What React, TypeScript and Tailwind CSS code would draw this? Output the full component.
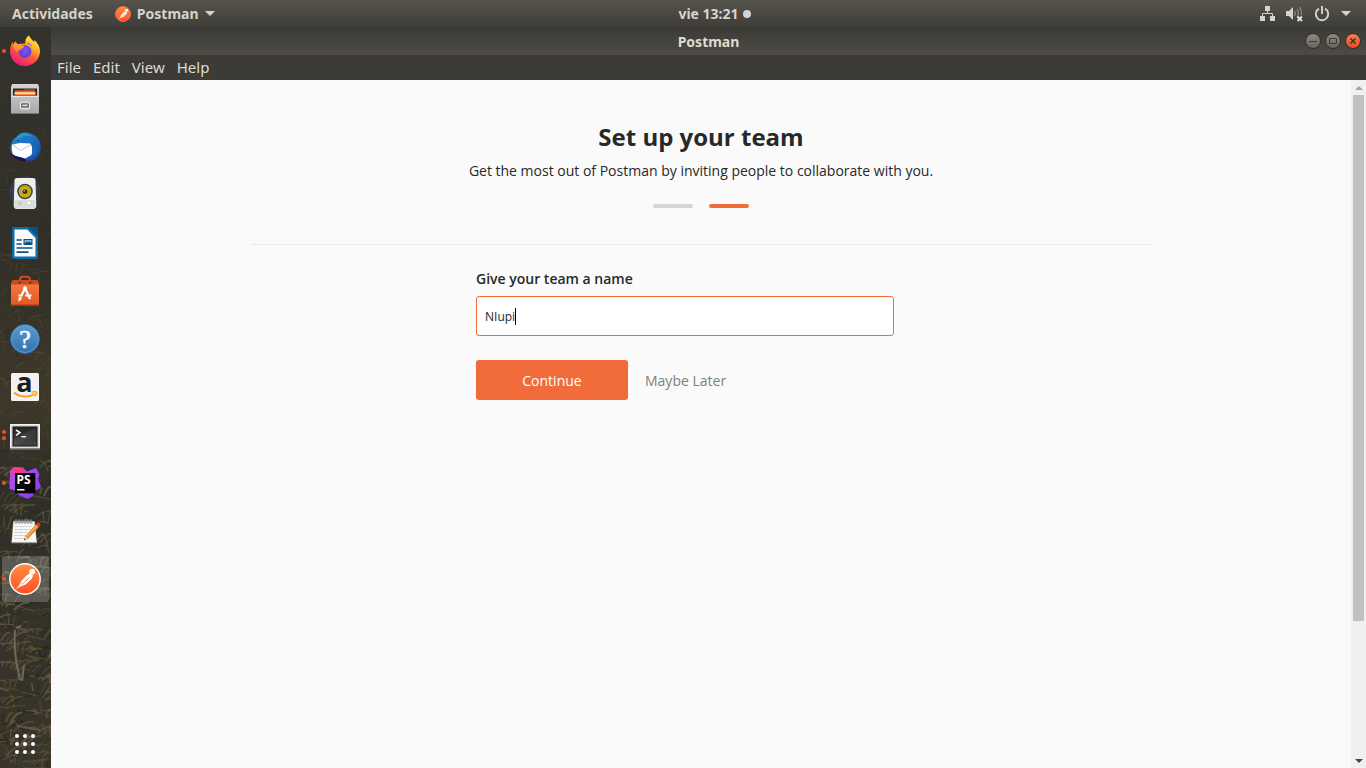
import { useState } from "react";
import type { ReactNode } from "react";

const uiFont = "font-['Noto_Sans','Open_Sans',sans-serif]";

function PostmanLogo({ className, ring = false }: { className: string; ring?: boolean }) {
  return (
    <svg viewBox="0 0 32 32" className={className} aria-hidden="true">
      <defs>
        <linearGradient id="postmanFill" x1="0" y1="0" x2="0" y2="1">
          <stop offset="0" stopColor="#ff9040" />
          <stop offset="1" stopColor="#ff5026" />
        </linearGradient>
      </defs>
      <circle cx="16" cy="16" r="15.2" fill="url(#postmanFill)" stroke={ring ? "#fff" : "#ff7a45"} strokeWidth="1.4" />
      <circle cx="23.200" cy="8.700" r="2.900" fill="#fff" />
      <path d="M20.500 10.500 17 13l-5.500 6-.8 2.800L6.800 26l5.700-3 3.700-1.200 6.500-6 1.500-3.300z" fill="#fff" />
      <path d="m20.500 14.500-7 6.500m-1.800-1.500 2 1.800" stroke="#f5733d" strokeWidth=".8" fill="none" />
    </svg>
  );
}

function Firefox() {
  return (
    <svg viewBox="0 0 32 32" className="size-8">
      <defs>
        <linearGradient id="ffBody" x1=".85" y1="0" x2=".3" y2="1">
          <stop offset="0" stopColor="#fff44f" />
          <stop offset=".35" stopColor="#ffb32a" />
          <stop offset=".6" stopColor="#ff5b36" />
          <stop offset="1" stopColor="#e5158a" />
        </linearGradient>
        <radialGradient id="ffGlobe" cx=".5" cy=".35" r=".7">
          <stop offset="0" stopColor="#8b4cf0" />
          <stop offset="1" stopColor="#4a48c8" />
        </radialGradient>
        <linearGradient id="ffFox" x1="0" y1="0" x2="0" y2="1">
          <stop offset="0" stopColor="#ffb02e" />
          <stop offset="1" stopColor="#ff7139" />
        </linearGradient>
      </defs>
      <path d="M19.8.4c1.4 2.8 3.600 4.200 5.200 6.500l.3-2C29 8 31 12 31 16c0 8.600-6.700 15-15.200 15S1 24.400 1 16.200c0-4 1.100-7 2.700-9.800l.7 3 2-3 1.800 2.500 8.200-.4C15.800 5 17.600 2 19.800.4z" fill="url(#ffBody)" />
      <circle cx="16" cy="16.500" r="6.500" fill="url(#ffGlobe)" />
      <path d="M14.600 9c3-1.600 6.400.3 7.800 2.500l.4-1.500-3-2.200z" fill="#9059ff" />
      <path d="M4.400 9.400 6.400 6.400l2.200 3.200c1.600-.4 3 .2 4 1.400h2.700c-.3 1.600-1.500 2-2.700 2.600l-.7 1.400c-2-.2-3.600.6-3.400 3C6 15 3.800 13 4.400 9.400z" fill="url(#ffFox)" />
    </svg>
  );
}

function Files() {
  return (
    <svg viewBox="0 0 32 32" className="size-8">
      <defs>
        <linearGradient id="cabinet" x1="0" y1="0" x2="0" y2="1">
          <stop offset="0" stopColor="#d4d4d4" />
          <stop offset="1" stopColor="#a9a9a9" />
        </linearGradient>
      </defs>
      <path d="M3 1h26l1 3v26H2V4z" fill="url(#cabinet)" />
      <path d="M2 30h28v1H2z" fill="#777" />
      <path d="M4 5.500h24v7H4z" fill="#2a2421" />
      <path d="M6 7h8l1-.8h11V12H6z" fill="#b34716" />
      <path d="M5.600 8.500h20.800v3.500H5.600z" fill="#f58a3c" />
      <path d="M5.600 9.500h20.800v1.200H5.600z" fill="#fff2e2" />
      <path d="M2.500 13h27v.8h-27z" fill="#efefef" />
      <rect x="11.500" y="19" width="9" height="7" rx="1" fill="#bdbdbd" stroke="#ededed" />
      <rect x="12.800" y="21" width="6.400" height="2.800" fill="#e8e8e8" stroke="#444" />
    </svg>
  );
}

function Thunderbird() {
  return (
    <svg viewBox="0 0 32 32" className="size-8">
      <defs>
        <linearGradient id="tbBlue" x1="0" y1="0" x2="1" y2="1">
          <stop offset="0" stopColor="#2089cf" />
          <stop offset=".5" stopColor="#1a6fc4" />
          <stop offset="1" stopColor="#173f94" />
        </linearGradient>
      </defs>
      <path d="M9 4.500C12 1.500 17 1 21 2.200 28 4.400 32 10 31.700 17c-.3 7-4.700 12-10.700 14l1-2.400-4 1.600C8 30 1 23 .6 15.500l1.600 1.700C1.800 13 3 9 6 7z" fill="url(#tbBlue)" />
      <path d="M12 2.400c4-1.600 9 .2 12 3.600-5-2-10-1.300-13 1.300-2 1.700-3.500 2-5.400 1.300C7.800 8 9 4 12 2.400z" fill="#2b93d2" />
      <path d="m2.600 13.800 8-1.800 12 .5 1 11-7.500 4L3.500 24z" fill="#fff" />
      <path d="m3 13.500 8.500 6L22 13.500" fill="none" stroke="#b9c4d8" />
      <path d="M.8 18c1 4 3 6 7 7.500 3 1 5.500 1 8.200 2.500l2 2C9 31 2.300 26 .8 18z" fill="#24104e" />
      <path d="M20.500 11c4 5 3.500 11 .4 15.500 5-2 8-6 8.300-12" fill="#1d65b9" />
      <circle cx="9" cy="9.500" r=".8" fill="#0b2f55" />
    </svg>
  );
}

function Rhythmbox() {
  return (
    <svg viewBox="0 0 32 32" className="size-8 overflow-visible">
      <g fill="none" stroke="#3e5f93">
        <circle cx="16" cy="13" r="12.500" opacity=".8" />
        <circle cx="16" cy="13" r="15" opacity=".5" />
      </g>
      <path d="M8-1h16c1.500 0 2.400.8 2.500 2.300l.8 25.200c0 2-1 3.500-3 3.500H7.700c-2 0-3-1.500-3-3.500L5.500 1.300C5.600-.2 6.500-1 8-1z" fill="#eeeeec" />
      <path d="M5.500 21h21l.5 6c0 1.500-1 2.500-2.500 2.500h-17C6 29.500 5 28.500 5 27z" fill="#dcdcda" />
      <circle cx="16" cy="12.500" r="7.800" fill="#44453f" />
      <circle cx="16" cy="12.500" r="6.200" fill="#d6b91f" />
      <circle cx="16" cy="12.500" r="4.800" fill="none" stroke="#8f7a0b" strokeWidth=".6" />
      <circle cx="16" cy="12.500" r="2.600" fill="#373832" />
      <circle cx="15.300" cy="11.700" r=".9" fill="#aaa" />
      <circle cx="11" cy="24.500" r="2" fill="#c9c9c7" />
      <rect x="18" y="22" width="3.500" height="4" rx="1.700" fill="#fff" stroke="#bbb" strokeWidth=".5" />
    </svg>
  );
}

function Writer() {
  return (
    <svg viewBox="0 0 32 32" className="size-8">
      <path d="M5 0h14.500L29 9.500V30c0 1.200-.8 2-2 2H5c-1.200 0-2-.8-2-2V2c0-1.200.8-2 2-2z" fill="#0f6aa8" />
      <path d="M19 0h10v9.500z" fill="#0b5288" />
      <path d="M5.500 2.500h12.800L26.500 11v18.500h-21z" fill="#fafafa" />
      <path d="M7.500 13h5.200m-5.200 4h5.200m-5.200 4h16m-16 4.200h12" stroke="#0d4f84" strokeWidth="1.700" />
      <rect x="14.500" y="12" width="9" height="6" fill="#0d4f84" />
      <path d="M15.500 13h7v3l-2-1.500-1.700 1-1-1-2.300 2z" fill="#78b8e5" />
    </svg>
  );
}

function Software() {
  return (
    <svg viewBox="0 0 32 32" className="size-8">
      <defs>
        <linearGradient id="bag" x1="0" y1="0" x2="0" y2="1">
          <stop offset="0" stopColor="#f47c45" />
          <stop offset="1" stopColor="#e55823" />
        </linearGradient>
      </defs>
      <path d="M11 8V4.500C11 2.500 12 1.700 14 1.700h4c2 0 3 .8 3 2.800V8" fill="none" stroke="#d64b1d" strokeWidth="2" />
      <path d="M3.500 5.500h25L30 9v21H2V9z" fill="url(#bag)" />
      <path d="M3.500 5.500h25L30 9.500H2z" fill="#cf4a1c" />
      <path d="M9.500 6.500H12v2H9.500zm10.500 0h2.500v2H20z" fill="#7e2a10" />
      <path d="M2 29.500h28V31H2z" fill="#aa3513" />
      <g fill="none" stroke="#fff" strokeWidth="2.200">
        <path d="m11 24 .8-2M13 19.500l3-6.500 5 11M9.500 20.500h4.200m2.500 0h6.300" />
      </g>
      <path d="m14 13.500 2-1.500 2 1.500M10.200 22.500l-.2 3 2.400-1.800" stroke="#fff" strokeWidth="1.200" fill="none" />
    </svg>
  );
}

function HelpIcon() {
  return (
    <svg viewBox="0 0 32 32" className="size-8 overflow-visible">
      <defs>
        <linearGradient id="helpBlue" x1="0" y1="0" x2="0" y2="1">
          <stop offset="0" stopColor="#5a9bd2" />
          <stop offset="1" stopColor="#3470ad" />
        </linearGradient>
      </defs>
      <circle cx="16" cy="16" r="14.500" fill="url(#helpBlue)" stroke="#2d639a" />
      <circle cx="16" cy="16" r="13.500" fill="none" stroke="#79b0dd" strokeWidth=".6" />
      <text x="16" y="25" textAnchor="middle" fill="#fff" fontSize="26" fontFamily="Liberation Serif" stroke="#fff" strokeWidth=".5">?</text>
    </svg>
  );
}

function Amazon() {
  return (
    <svg viewBox="0 0 32 32" className="size-8 overflow-visible">
      <rect x="2" y="2" width="28" height="28" rx="1.500" fill="#f2f2f2" />
      <text x="15.500" y="20.500" textAnchor="middle" fill="#1d1d1b" fontSize="27" fontWeight="700" fontFamily="Open Sans">a</text>
      <path d="M5 21.500c6 5 15 5.200 20.500 1.500" fill="none" stroke="#f79b1b" strokeWidth="1.800" />
      <path d="M22.500 21.300c2-.6 4.200-.8 4.800-.2.500.7-.3 2.800-1.500 4.300" fill="none" stroke="#f79b1b" strokeWidth="1.400" />
    </svg>
  );
}

function Terminal() {
  return (
    <svg viewBox="0 0 32 32" className="size-8">
      <defs>
        <linearGradient id="termScreen" x1="0" y1="0" x2="0" y2="1">
          <stop offset="0" stopColor="#252525" />
          <stop offset="1" stopColor="#454545" />
        </linearGradient>
      </defs>
      <rect x="1.500" y="5.500" width="29" height="24" fill="#d9d9d9" stroke="#f2f2f2" />
      <path d="M1 29h30v1.500H1z" fill="#888" />
      <rect x="4" y="8" width="24" height="19" fill="url(#termScreen)" stroke="#161616" />
      <path d="M27.500 8.500v7L8 26.500H4.500V20z" fill="#fff" opacity=".06" />
      <path d="m7 11 4 2.600L7 16.400" fill="none" stroke="#fff" strokeWidth="1.500" />
      <path d="M12.300 17.700H17" stroke="#fff" strokeWidth="1.300" />
    </svg>
  );
}

function PhpStorm() {
  return (
    <svg viewBox="0 0 32 32" className="size-8">
      <defs>
        <linearGradient id="stormFill" x1="0" y1="0" x2="1" y2="1">
          <stop offset="0" stopColor="#e93ca8" />
          <stop offset=".3" stopColor="#a94ff2" />
          <stop offset="1" stopColor="#8437f0" />
        </linearGradient>
      </defs>
      <path d="m1 4 4-4 9 1 4 3.500L27 1l3.500 6.500-1.500 5 3 7-2.500 3-4 1L24 29l-5.500 3-8.500-3.700L7 24l-6.500-2z" fill="url(#stormFill)" />
      <path d="M3.500 1.500 5 0l9 1 2 5H6z" fill="#fb3a86" />
      <rect x="6" y="6" width="20.300" height="20.300" fill="#050505" />
      <text x="7.500" y="17" fill="#fff" fontSize="12" fontWeight="700" fontFamily="Noto Sans">PS</text>
      <path d="M8 22h7.500v1.500H8z" fill="#fff" />
    </svg>
  );
}

function Notes() {
  return (
    <svg viewBox="0 0 32 32" className="size-8">
      <path d="M4.500 6.500h21L27.500 27H2.800z" fill="#f7f7f5" stroke="#dededc" strokeWidth=".5" />
      <path d="M2.500 27h25.500v1.200H2.500z" fill="#a3a3a0" />
      <path d="M6 11.500h17m-17.200 3h16m-16.200 3h14m-14.100 3h12m-12.200 3h10" stroke="#cfcfcd" strokeDasharray="3 .8 5 .8" />
      <g fill="none" stroke="#858585">
        {[7, 10, 13, 16, 19, 22].map((x) => (
          <ellipse key={x} cx={x} cy="6.500" rx="1" ry="2" />
        ))}
      </g>
      <path d="M16 21.500 27 9.300l3 2.700-11 12-4 1.200z" fill="#f18a22" />
      <path d="m17 22.300 11.500-12" stroke="#ffc36b" strokeWidth="1" />
      <path d="m27 9.300 1.300-1.500c1.300-1.200 4.200 1.200 3 2.700L30 12z" fill="#d83b3b" />
      <path d="m16 21.500-1 3.700 4-1.200z" fill="#f0d6a8" />
      <path d="m15.500 23.500-.5 1.700 1.800-.5z" fill="#222" />
    </svg>
  );
}

interface DockApp {
  name: string;
  icon: ReactNode;
  running?: number;
  active?: boolean;
}

const dockApps: DockApp[] = [
  { name: "Firefox", icon: <Firefox />, running: 1 },
  { name: "Archivos", icon: <Files /> },
  { name: "Thunderbird", icon: <Thunderbird /> },
  { name: "Rhythmbox", icon: <Rhythmbox /> },
  { name: "LibreOffice Writer", icon: <Writer /> },
  { name: "Software", icon: <Software /> },
  { name: "Ayuda", icon: <HelpIcon /> },
  { name: "Amazon", icon: <Amazon /> },
  { name: "Terminal", icon: <Terminal />, running: 2 },
  { name: "PhpStorm", icon: <PhpStorm />, running: 1 },
  { name: "Editor de notas", icon: <Notes /> },
  { name: "Postman", icon: <PostmanLogo className="size-8" ring />, running: 1, active: true },
];

const grassColors = ["#5f5a2c", "#5a4c3a", "#464d28", "#6f6350", "#26261e", "#57552a", "#66554b", "#2c2a22"];

// Wallpaper seen through the translucent dock: sparse at the top, dense grass below.
const grass = Array.from({ length: 620 }, (_, i) => {
  const t = ((i * 241) % 620) / 620;
  const x = ((i * 37) % 67) - 8;
  const y = Math.round(750 * Math.sqrt(t));
  const dx = ((i * 29) % 31) - 8;
  const dy = ((i * 17) % 19) - 13;
  return {
    d: `M${x} ${y}q${Math.round(dx / 2)} ${dy - 2} ${dx} ${dy}`,
    color: grassColors[(i * 5 + (i >> 3)) % grassColors.length],
    opacity: y < 120 ? 0.06 : y < 220 ? 0.14 : y < 440 ? 0.28 : 0.7,
    width: 1 + (i % 3) * 0.5,
  };
});

function Dock() {
  return (
    <aside className="relative isolate flex w-[51px] shrink-0 flex-col bg-[#302e27]" aria-label="Dock">
      <svg viewBox="0 0 51 741" preserveAspectRatio="xMidYMin slice" className="absolute inset-0 -z-10 size-full" aria-hidden="true">
        <defs>
          <linearGradient id="dockShade" x1="0" y1="0" x2="0" y2="1">
            <stop offset="0" stopColor="#33322c" />
            <stop offset=".3" stopColor="#322f28" />
            <stop offset=".5" stopColor="#3e382a" />
            <stop offset=".62" stopColor="#2f2e28" />
            <stop offset="1" stopColor="#3a352b" />
          </linearGradient>
        </defs>
        <rect width="51" height="741" fill="url(#dockShade)" />
        {grass.map((g, i) => (
          <path key={i} d={g.d} stroke={g.color} strokeWidth={g.width} opacity={g.opacity} fill="none" />
        ))}
        <path d="M15 603c-1 12 0 24 2 36l3 14M16 601l5-2M24 638l-2 16" stroke="#716858" strokeWidth="2" fill="none" />
      </svg>
      <nav className="flex flex-col">
        {dockApps.map((app) => (
          <button key={app.name} aria-label={app.name} className="relative flex h-12 items-center justify-center pr-[1px]">
            {app.active && <span className="absolute inset-x-[2px] inset-y-[1px] rounded-[3px] bg-white/20" />}
            {app.running && (
              <span className="absolute left-[2px] flex flex-col gap-[2px]">
                {Array.from({ length: app.running }, (_, i) => (
                  <span key={i} className="size-1 rounded-full bg-[#e95420]" />
                ))}
              </span>
            )}
            <span className="relative">{app.icon}</span>
          </button>
        ))}
      </nav>
      <button aria-label="Mostrar aplicaciones" className="mt-auto flex h-12 items-center justify-center pr-[1px]">
        <span className="grid grid-cols-3 gap-1">
          {Array.from({ length: 9 }, (_, i) => (
            <span key={i} className="size-1 rounded-full bg-white" />
          ))}
        </span>
      </button>
    </aside>
  );
}

function Caret({ className = "" }: { className?: string }) {
  return (
    <svg viewBox="0 0 10 5" className={`h-[5px] w-[10px] ${className}`} aria-hidden="true">
      <path d="M0 0h10L5 5z" fill="currentColor" />
    </svg>
  );
}

function TopBar() {
  return (
    <header className={`grid h-[27px] shrink-0 grid-cols-[1fr_auto_1fr] items-center bg-linear-to-b from-[#57544c] to-[#3e3d38] px-3 text-[14px] font-bold text-[#d5d3cf] ${uiFont}`}>
      <div className="flex items-center gap-[22px]">
        <button>Actividades</button>
        <button className="flex items-center gap-[6px]">
          <PostmanLogo className="size-4" />
          Postman
          <Caret />
        </button>
      </div>
      <button className="ml-[63px] flex items-center gap-1">
        vie 13:21
        <span className="size-2 rounded-full bg-[#d5d3cf]" />
      </button>
      <div className="flex items-center justify-end gap-[11px] pr-[3px]">
        <svg viewBox="0 0 15 15" className="size-[15px]" aria-label="Red">
          <path d="M5 0h5v5H5zM0 10h5v5H0zm10 0h5v5h-5z" fill="#d5d3cf" />
          <path d="M7.500 5v2.500M2.500 10V7.500h10V10" fill="none" stroke="#d5d3cf" />
        </svg>
        <svg viewBox="0 0 17 16" className="h-4 w-[17px]" aria-label="Sonido silenciado">
          <path d="M0 5h3l4-4v13l-4-4H0z" fill="#d5d3cf" />
          <path d="M8.500 5q1.500 2.500 0 5M11 3q2.800 4.500 0 9M13.500 1q2.500 3.500 2 8" fill="none" stroke="#85837c" strokeWidth="1.500" />
          <path d="m11.500 10.500 4.500 4.500m0-4.500L11.500 15" stroke="#e2e0dc" strokeWidth="2" />
        </svg>
        <svg viewBox="0 0 16 16" className="size-4" aria-label="Apagar">
          <path d="M5 2.600a6.200 6.200 0 1 0 6 0M8 0v8" fill="none" stroke="#d5d3cf" strokeWidth="1.900" />
        </svg>
        <Caret className="text-[#d5d3cf]" />
      </div>
    </header>
  );
}

function TitleBar() {
  const round = "flex size-4 items-center justify-center rounded-full border border-[#2e2d29]";
  return (
    <div className={`grid h-7 shrink-0 grid-cols-[1fr_auto_1fr] items-center bg-linear-to-b from-[#3b3a36] to-[#4d4b44] text-[14px] font-bold text-[#dfdbd2] ${uiFont}`}>
      <span />
      <h1>Postman</h1>
      <div className="flex justify-end gap-1 pr-[5px]">
        <button aria-label="Minimizar" className={`${round} bg-linear-to-b from-[#8b8982] to-[#67655e]`}>
          <svg viewBox="0 0 10 10" className="size-[10px]"><path d="M1 5.500h8" stroke="#3c3b37" /></svg>
        </button>
        <button aria-label="Maximizar" className={`${round} bg-linear-to-b from-[#8b8982] to-[#67655e]`}>
          <svg viewBox="0 0 10 10" className="size-[10px]"><path d="M1.500 2.500h7v5h-7z" fill="none" stroke="#3c3b37" /></svg>
        </button>
        <button aria-label="Cerrar" className={`${round} bg-linear-to-b from-[#f47c50] to-[#e2501c]`}>
          <svg viewBox="0 0 10 10" className="size-[10px]"><path d="m2.500 2.500 5 5m0-5-5 5" stroke="#3c2a20" strokeWidth="1.300" /></svg>
        </button>
      </div>
    </div>
  );
}

function Scrollbar() {
  return (
    <div className="flex w-[15px] shrink-0 flex-col items-center bg-[#f0f0f0]" aria-hidden="true">
      <span className="flex h-[15px] items-center"><svg viewBox="0 0 8 4" className="h-1 w-2"><path d="M0 4h8L4 0z" fill="#a3a3a3" /></svg></span>
      <div className="flex w-full flex-1 justify-center">
        <span className="h-[80%] w-[11px] bg-[#c1c1c1]" />
      </div>
      <span className="flex h-[15px] items-center"><svg viewBox="0 0 8 4" className="h-1 w-2"><path d="M0 0h8L4 4z" fill="#444" /></svg></span>
    </div>
  );
}

export default function App() {
  const [team, setTeam] = useState("NIupi");
  return (
    <div className="flex h-screen flex-col overflow-hidden">
      <TopBar />
      <div className="flex min-h-0 flex-1">
        <Dock />
        <div className="flex min-w-0 flex-1 flex-col bg-[#fafafa]">
          <TitleBar />
          <nav className={`flex h-[25px] shrink-0 items-center gap-3 bg-[#3c3b37] px-[6px] text-[15px] text-[#dfdbd2] ${uiFont}`}>
            <button>File</button>
            <button>Edit</button>
            <button>View</button>
            <button>Help</button>
          </nav>
          <div className="flex min-h-0 flex-1 font-['Open_Sans',sans-serif] text-[14px] text-[#282828]">
            <main className="flex-1 overflow-hidden px-4 pt-10">
              <div className="mx-auto max-w-[900px]">
                <div className="flex flex-col items-center border-b border-[#eaeaea] pb-9">
                  <h2 className="text-[24px] leading-[34px] font-bold">Set up your team</h2>
                  <p className="mt-[5px] leading-6">Get the most out of Postman by inviting people to collaborate with you.</p>
                  <div className="mt-[21px] flex gap-4">
                    <span className="h-1 w-10 rounded-full bg-[#d4d4d4]" />
                    <span className="h-1 w-10 rounded-full bg-[#f26b3a]" />
                  </div>
                </div>
                <form className="mx-auto max-w-[450px] pt-6" onSubmit={(e) => e.preventDefault()}>
                  <label htmlFor="team" className="block leading-5 font-semibold">Give your team a name</label>
                  <div className="relative mt-[7px] max-w-[418px]">
                    <input
                      id="team"
                      value={team}
                      onChange={(e) => setTeam(e.target.value)}
                      className="h-10 w-full rounded-[3px] border border-[#f26b3a] bg-white px-2 text-[12px] caret-transparent outline-none"
                    />
                    <span className="pointer-events-none absolute top-3 left-[39px] h-[17px] w-px bg-black" />
                  </div>
                  <div className="mt-6 flex items-center gap-[17px]">
                    <button type="submit" className="h-10 w-[152px] rounded-[3px] bg-[#f26b3a] text-white">Continue</button>
                    <button type="button" className="text-[#808080]">Maybe Later</button>
                  </div>
                </form>
              </div>
            </main>
            <Scrollbar />
          </div>
        </div>
      </div>
    </div>
  );
}
